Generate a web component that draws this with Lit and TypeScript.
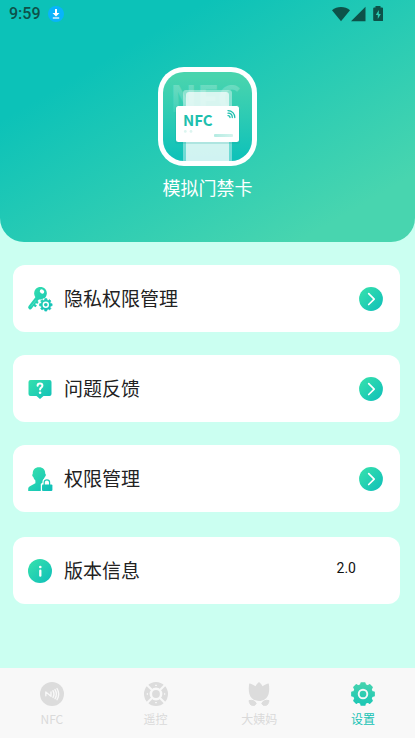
import { LitElement, html, svg, css, TemplateResult } from "lit";
import { customElement, property, state } from "lit/decorators.js";
import { classMap } from "lit/directives/class-map.js";

/** Outline of a toothed wheel centred on (cx, cy). */
function gearPath(cx: number, cy: number, outer: number, inner: number, teeth: number): string {
  const step = (Math.PI * 2) / teeth;
  const points: string[] = [];
  for (let i = 0; i < teeth; i++) {
    const a = i * step - Math.PI / 2;
    const corners: [number, number][] = [
      [-0.32, inner],
      [-0.2, outer],
      [0.2, outer],
      [0.32, inner],
    ];
    for (const [offset, r] of corners) {
      const t = a + offset * step;
      points.push(`${(cx + r * Math.cos(t)).toFixed(2)} ${(cy + r * Math.sin(t)).toFixed(2)}`);
    }
  }
  return `M${points.join("L")}Z`;
}

const mint = (id: string) => svg`
  <defs>
    <linearGradient id=${id} x1="0" y1="0" x2="24" y2="24" gradientUnits="userSpaceOnUse">
      <stop offset="0.1" stop-color="#34dfad"/>
      <stop offset="0.95" stop-color="#10c0b9"/>
    </linearGradient>
  </defs>`;

const keyIcon = html`
  <svg class="icon" viewBox="0 0 24 24" aria-hidden="true">
    ${mint("m")}
    <path d="M10.500 9.500L2.200 20.300" stroke="url(#m)" stroke-width="4" stroke-linecap="round"/>
    <path d="M5.200 17.200L8.200 19.400M7.600 14.200L10 16" stroke="url(#m)" stroke-width="2.400"/>
    <path d="M12.400 0c3.800 0 6.400 2.600 6.400 6.200 0 3.800-2.800 6.400-6.400 6.400-3.800 0-6.200-2.800-6.200-6.400C6.200 2.600 8.800 0 12.400 0z" fill="url(#m)"/>
    <ellipse cx="14" cy="4.500" rx="2.400" ry="1.900" fill="#fff" transform="rotate(40 14 4.500)"/>
    <path d="M8 13.200L3 19.600" stroke="#7de8d0" stroke-width="0.500"/>
    <circle cx="17.800" cy="17.800" r="6.900" fill="#fff"/>
    <path d=${gearPath(17.8, 17.8, 6.4, 5, 8)} fill="url(#m)" stroke="url(#m)" stroke-width="0.600" stroke-linejoin="round"/>
    <circle cx="17.800" cy="17.800" r="2.500" fill="#1cc8b4" stroke="#fff" stroke-width="1.400"/>
  </svg>`;

const questionIcon = html`
  <svg class="icon" viewBox="0 0 24 24" aria-hidden="true">
    ${mint("m")}
    <path d="M2.500 3h19A2 2 0 0 1 23.500 5v12a2 2 0 0 1-2 2H15.500l-3.500 3-3.500-3H2.500a2 2 0 0 1-2-2V5a2 2 0 0 1 2-2z" fill="url(#m)"/>
    <path d="M9.600 8.800c0-1.500 1-2.300 2.400-2.300s2.400.8 2.400 2.200c0 1.700-2.300 1.900-2.300 3.800" fill="none" stroke="#fff" stroke-width="2" stroke-linecap="round"/>
    <circle cx="12.100" cy="15.800" r="1.300" fill="#fff"/>
  </svg>`;

const personIcon = html`
  <svg class="icon" viewBox="0 0 24 24" aria-hidden="true">
    ${mint("m")}
    <path d="M11 0.200c4 0 6.400 2.600 6.200 6.200l.6 1.200c.2 1-.4 2-1 2.300-.5 1.500-1.200 2.600-2.100 3.500v2.200l3.800 1.800V24H.2v-2.200c0-1.500 1-2.500 3-3.300l4.200-2.200v-2.900C6.500 12.500 5.700 11.400 5.300 9.900c-.8-.3-1.200-1.300-1-2.200l.5-1.300C4.600 2.800 7 .2 11 .2z" fill="url(#m)"/>
    <path d="M12.800 24V17l1.800-1.400v-.7c0-6 8.400-6 8.400 0V24z" fill="#fff"/>
    <rect x="14" y="17.600" width="10.400" height="6.400" rx="1" fill="url(#m)"/>
    <path d="M16.200 18v-2.400c0-3.600 5.400-3.600 5.400 0V18" fill="none" stroke="url(#m)" stroke-width="1.200"/>
  </svg>`;

const infoIcon = html`
  <svg class="icon" viewBox="0 0 24 24" aria-hidden="true">
    ${mint("m")}
    <circle cx="12" cy="12" r="12" fill="url(#m)"/>
    <circle cx="12.300" cy="8" r="1.300" fill="#fff"/>
    <path d="M12.300 11.700v5" stroke="#fff" stroke-width="2.300" stroke-linecap="round"/>
  </svg>`;

const goIcon = html`
  <svg class="icon" viewBox="0 0 24 24" aria-hidden="true">
    ${mint("m")}
    <circle cx="12" cy="12" r="11.900" fill="url(#m)"/>
    <path d="M9.700 6.700l5.500 5.400-5.500 5.400" fill="none" stroke="#fff" stroke-width="1.700" stroke-linecap="round" stroke-linejoin="round"/>
  </svg>`;

@customElement("status-bar")
class StatusBar extends LitElement {
  static styles = css`
    :host {
      display: flex;
      align-items: center;
      height: 28px;
      padding: 0 32px 0 9px;
      color: #0d5249;
      font: 500 16px/28px Roboto, sans-serif;
    }
    .download {
      width: 16px;
      height: 16px;
      margin-left: 7px;
    }
    .signals {
      width: 52px;
      height: 16px;
      margin-left: auto;
    }
  `;
  render() {
    return html`
      <span>9:59</span>
      <svg class="download" viewBox="0 0 16 16" aria-hidden="true">
        <circle cx="8" cy="8" r="8" fill="#08b4fb"/>
        <path d="M8 3v6" stroke="#fff" stroke-width="2"/>
        <path d="M4.500 7h7L8 10.500z" fill="#fff"/>
        <path d="M4.800 12h6.400" stroke="#fff" stroke-width="1.200"/>
      </svg>
      <svg class="signals" viewBox="0 0 52 16" aria-hidden="true">
        <path d="M1 4.200C6-.2 14-.2 19 4.200L10 15.200z" fill="currentColor"/>
        <path d="M34.500 .8V15.200H20z" fill="currentColor"/>
        <path d="M44.500 0h5v1.600h1.700a1 1 0 0 1 1 1V14a1 1 0 0 1-1 1h-8a1 1 0 0 1-1-1V2.600a1 1 0 0 1 1-1h1.300z" fill="currentColor"/>
        <path d="M47.800 4L44.800 9h2v4l3-5h-2z" fill="#2accb2"/>
      </svg>
    `;
  }
}

@customElement("app-logo")
class AppLogo extends LitElement {
  static styles = css`
    :host {
      display: block;
      width: 99px;
      height: 99px;
    }
    svg {
      display: block;
      width: 100%;
      height: 100%;
    }
    .ghost,
    .brand {
      font-family: "Noto Sans CJK SC", sans-serif;
      font-weight: 700;
    }
    .ghost {
      font-size: 36px;
    }
    .brand {
      font-size: 15px;
    }
  `;
  render() {
    return html`
      <svg viewBox="0 0 99 99" role="img" aria-label="NFC">
        <defs>
          <linearGradient id="bg" x1="0" y1="0" x2="0" y2="1">
            <stop offset="0.050" stop-color="#49d4ae"/>
            <stop offset="0.950" stop-color="#10c2b9"/>
          </linearGradient>
          <linearGradient id="fade" x1="0" y1="0" x2="0" y2="1">
            <stop offset="0.200" stop-color="#fff" stop-opacity="0.240"/>
            <stop offset="0.850" stop-color="#fff" stop-opacity="0.060"/>
          </linearGradient>
          <linearGradient id="bar" x1="0" y1="0" x2="1" y2="0">
            <stop offset="0" stop-color="#b4ebe2"/>
            <stop offset="1" stop-color="#d4f4ee"/>
          </linearGradient>
        </defs>
        <rect width="99" height="99" rx="26" fill="#fff"/>
        <rect x="5" y="5" width="89" height="89" rx="21" fill="url(#bg)"/>
        <text class="ghost" x="12" y="45" fill="url(#fade)">NFC</text>
        <path d="M25 94V26a3 3 0 0 1 3-3h43a3 3 0 0 1 3 3V94z" fill="#fff" fill-opacity="0.400"/>
        <path d="M28 94V28a3 3 0 0 1 3-3h37a3 3 0 0 1 3 3V94z" fill="#fff" fill-opacity="0.680"/>
        <rect x="17" y="39" width="65" height="38" rx="3" fill="#0b9f95" fill-opacity="0.180"/>
        <rect x="18" y="39" width="63" height="36" rx="2.500" fill="#fff"/>
        <text class="brand" x="25" y="59" fill="#1fbfae">NFC</text>
        <circle cx="27.300" cy="64.400" r="1.400" fill="#dcf5f0"/>
        <circle cx="33" cy="64.400" r="1.400" fill="#dcf5f0"/>
        <rect x="56" y="67" width="19" height="3" rx="1" fill="url(#bar)"/>
        <g fill="none" stroke="#1fbfae" stroke-width="1.300" stroke-linecap="round">
          <path d="M70 43.600c4 0 6.800 3 6.800 7"/>
          <path d="M70 46.200c2.700 0 4.300 1.800 4.300 4.400"/>
          <path d="M70 48.600c1.300 0 2 .8 2 2"/>
        </g>
      </svg>
    `;
  }
}

@customElement("setting-row")
class SettingRow extends LitElement {
  @property() label = "";
  @property() value = "";
  @property({ attribute: false }) icon: TemplateResult = infoIcon;

  static styles = css`
    :host {
      display: block;
    }
    .card {
      box-sizing: border-box;
      display: flex;
      align-items: center;
      gap: 12px;
      width: 100%;
      height: 67px;
      margin: 0;
      padding: 0 17px 0 15px;
      border: 0;
      border-radius: 12px;
      background: #fff;
      color: #222;
      font: 400 19px/28px "Noto Sans CJK SC", sans-serif;
      text-align: left;
    }
    button.card {
      cursor: pointer;
    }
    .icon {
      display: block;
      flex: none;
      width: 24px;
      height: 24px;
      overflow: visible;
    }
    .label {
      flex: 1;
      padding-bottom: 2px;
    }
    .value {
      padding: 0 27px 6px 0;
      color: #111;
      font: 400 14px/20px Roboto, sans-serif;
    }
  `;
  render() {
    return this.value
      ? html`<div class="card">
          ${this.icon}<span class="label">${this.label}</span><span class="value">${this.value}</span>
        </div>`
      : html`<button class="card" type="button">
          ${this.icon}<span class="label">${this.label}</span>${goIcon}
        </button>`;
  }
}

interface Tab {
  id: string;
  label: string;
  icon: TemplateResult;
}

const tabs: Tab[] = [
  {
    id: "nfc",
    label: "NFC",
    icon: html`<svg class="glyph" viewBox="0 0 24 24" aria-hidden="true">
      <circle cx="12" cy="12" r="12" fill="#dcdcdc"/>
      <g fill="none" stroke="#f8f8f8" stroke-width="1.400" stroke-linecap="round" stroke-linejoin="round">
        <path d="M5.800 13.800V10l5.200 4.200V10"/>
        <path d="M13 8.700c1.200 2 1.200 4.800 0 6.800M15 7.600c1.700 2.700 1.700 6.300 0 9M17 6.500c2.100 3.400 2.100 7.800 0 11.200"/>
      </g>
    </svg>`,
  },
  {
    id: "remote",
    label: "遥控",
    icon: html`<svg class="glyph" viewBox="0 0 24 24" aria-hidden="true">
      <circle cx="12" cy="12" r="9.200" fill="none" stroke="#dcdcdc" stroke-width="5.600"/>
      <path d="M3 3l18 18M21 3L3 21" stroke="#f8f8f8" stroke-width="2.200"/>
      <circle cx="12" cy="12" r="5.800" fill="#f8f8f8"/>
      <circle cx="12" cy="12" r="3.900" fill="#dcdcdc"/>
      <path d="M12 2.300l1.200 1.600h-2.400zM12 21.700l1.200-1.600h-2.400zM2.300 12l1.600-1.200v2.400zM21.700 12l-1.600-1.200v2.400z" fill="#f8f8f8"/>
    </svg>`,
  },
  {
    id: "period",
    label: "大姨妈",
    icon: html`<svg class="glyph" viewBox="0 0 24 24" aria-hidden="true">
      <path d="M12 0c1.600 1.200 2.800 2.600 3.600 4.200C17.600 2.600 19.600 1.700 21.800 1.400c.6 4 .6 7.500-.2 10.600C20.300 16.600 16.500 19 12 19s-8.300-2.400-9.600-7C1.600 8.900 1.600 5.400 2.200 1.400c2.200.3 4.200 1.200 6.200 2.800C9.200 2.600 10.400 1.200 12 0z" fill="#dcdcdc"/>
      <path d="M2 18.600c3.400-.8 6.200.2 7.200 2.900-1.700 3.600-6.400 3-7.200-2.900zM22 18.600c-3.400-.8-6.200.2-7.200 2.900 1.700 3.600 6.400 3 7.200-2.900z" fill="#dcdcdc" stroke="#dcdcdc" stroke-linejoin="round"/>
    </svg>`,
  },
  {
    id: "settings",
    label: "设置",
    icon: html`<svg class="glyph" viewBox="0 0 24 24" aria-hidden="true">
      <defs>
        <linearGradient id="g" x1="0" y1="0" x2="0" y2="1">
          <stop offset="0" stop-color="#45d3ae"/>
          <stop offset="1" stop-color="#1bc7b5"/>
        </linearGradient>
      </defs>
      <path d=${gearPath(12, 12, 11.2, 9.2, 8)} fill="url(#g)" stroke="url(#g)" stroke-width="1.600" stroke-linejoin="round"/>
      <circle cx="12" cy="12" r="4.300" fill="none" stroke="#f8f8f8" stroke-width="1.900"/>
    </svg>`,
  },
];

@customElement("tab-bar")
class TabBar extends LitElement {
  @state() private current = "settings";

  static styles = css`
    :host {
      display: block;
    }
    .bar {
      display: grid;
      grid-template-columns: repeat(4, 1fr);
      height: 70px;
      background: #f8f8f8;
    }
    .tab {
      display: flex;
      flex-direction: column;
      align-items: center;
      gap: 4px;
      padding-top: 14px;
      color: #dadada;
      font: 400 12px/18px "Noto Sans CJK SC", sans-serif;
      text-decoration: none;
    }
    .active {
      color: #14c2b4;
    }
    .glyph {
      display: block;
      width: 24px;
      height: 24px;
    }
  `;
  render() {
    return html`<nav class="bar">
      ${tabs.map(
        (tab) => html`<a
          class=${classMap({ tab: true, active: tab.id === this.current })}
          href="#${tab.id}"
          aria-current=${tab.id === this.current ? "page" : "false"}
          @click=${() => (this.current = tab.id)}
          >${tab.icon}<span>${tab.label}</span></a
        >`
      )}
    </nav>`;
  }
}

@customElement("app-root")
class AppRoot extends LitElement {
  static styles = css`
    :host {
      display: flex;
      flex-direction: column;
      min-height: 100vh;
      background: #cbfff1;
      font-family: "Noto Sans CJK SC", sans-serif;
    }
    .hero {
      display: flex;
      flex-direction: column;
      padding-bottom: 40px;
      border-radius: 0 0 24px 24px;
      background: linear-gradient(150deg, #0cc2b8 25%, #48d5af 86%);
    }
    .identity {
      display: flex;
      flex-direction: column;
      align-items: center;
      gap: 7px;
      padding-top: 39px;
    }
    .name {
      margin: 0;
      color: #fff;
      font-size: 18px;
      font-weight: 400;
      line-height: 29px;
    }
    .content {
      flex: 1;
      display: flex;
      flex-direction: column;
      gap: 25px;
      padding: 23px 15px 24px 13px;
    }
    .list {
      display: flex;
      flex-direction: column;
      gap: 23px;
    }
  `;
  render() {
    return html`
      <header class="hero">
        <status-bar></status-bar>
        <div class="identity">
          <app-logo></app-logo>
          <h1 class="name">模拟门禁卡</h1>
        </div>
      </header>
      <main class="content">
        <div class="list">
          <setting-row label="隐私权限管理" .icon=${keyIcon}></setting-row>
          <setting-row label="问题反馈" .icon=${questionIcon}></setting-row>
          <setting-row label="权限管理" .icon=${personIcon}></setting-row>
        </div>
        <setting-row label="版本信息" value="2.0" .icon=${infoIcon}></setting-row>
      </main>
      <tab-bar></tab-bar>
    `;
  }
}
